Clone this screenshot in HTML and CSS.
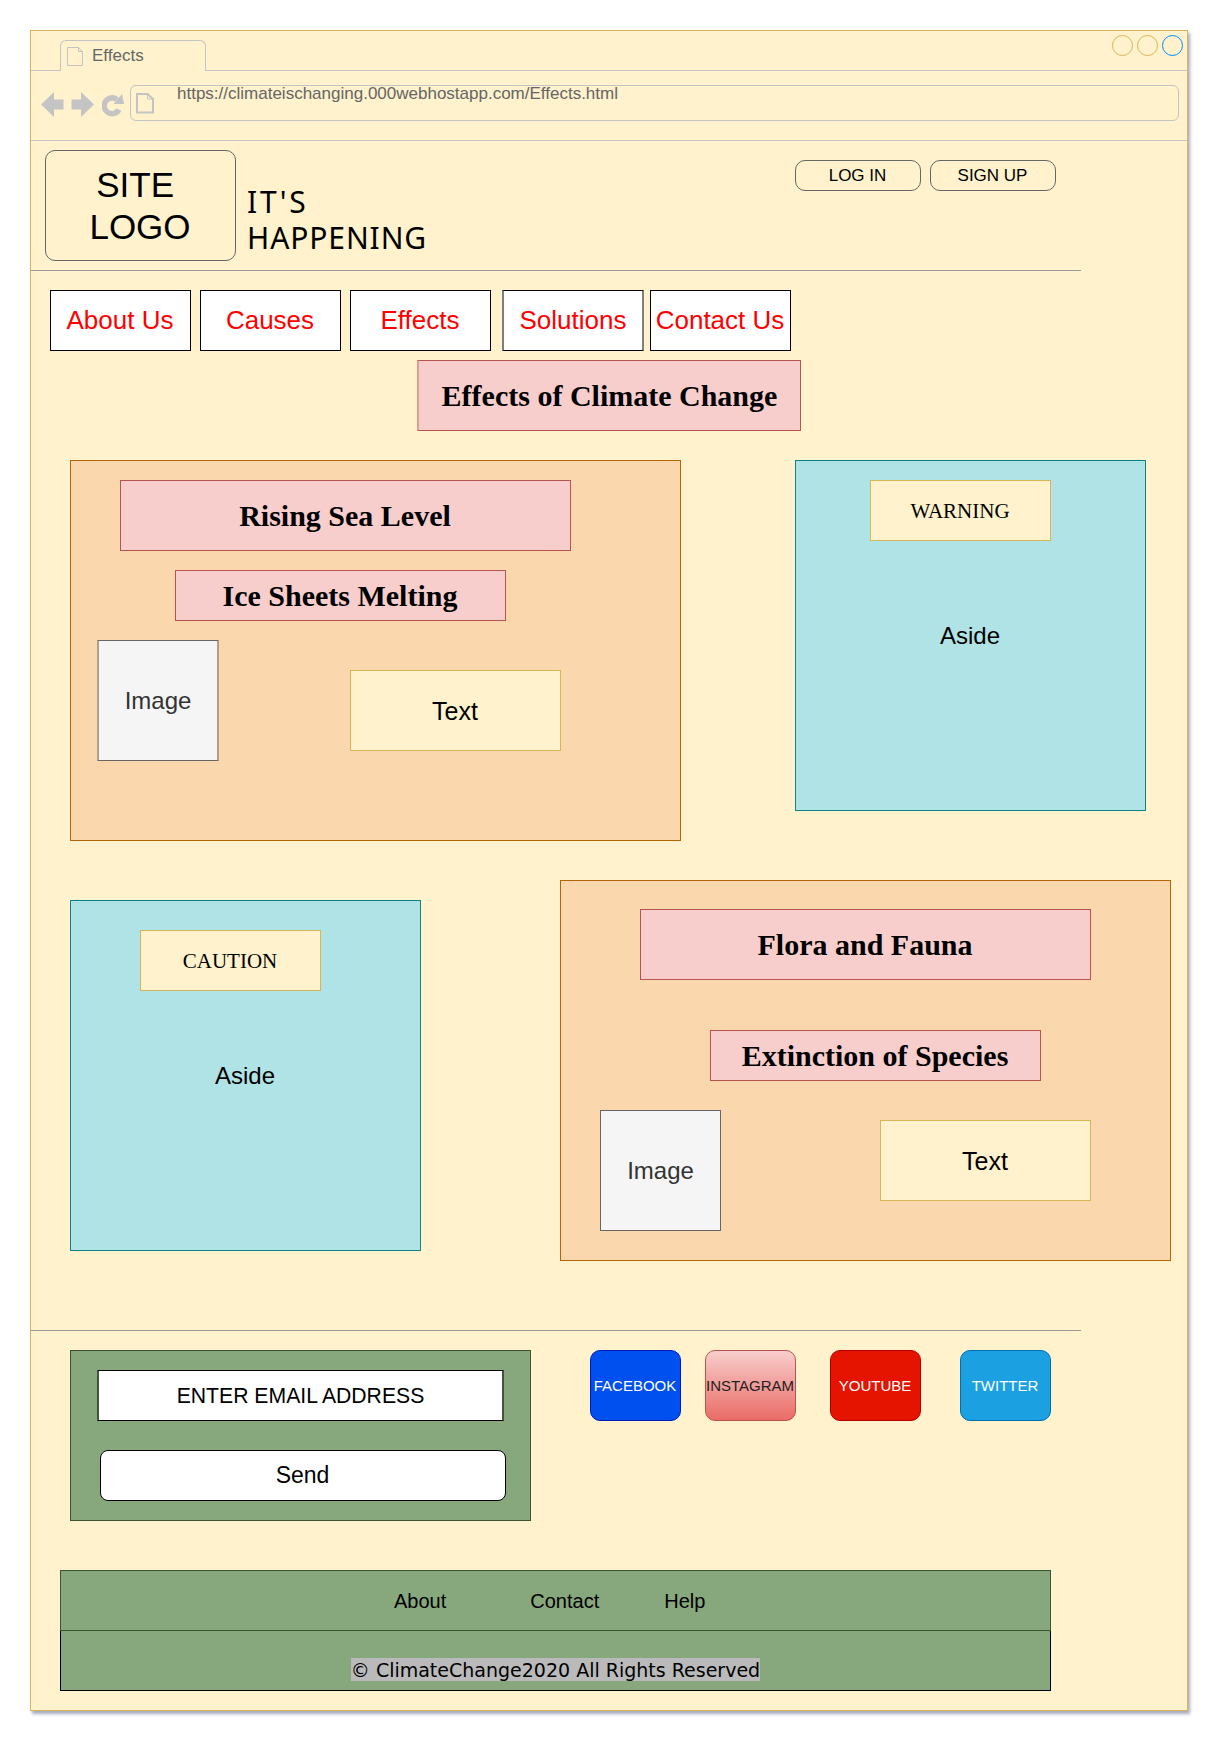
FILE: index.html
```html
<!DOCTYPE html>
<html lang="en">
<head>
<meta charset="utf-8">
<title>Effects</title>
<link rel="stylesheet" href="styles.css">
</head>
<body>
<div class="window">
  <div class="tabstrip">
    <div class="tab">
      <svg class="tab-icon" width="17" height="20" viewBox="0 0 17 20" fill="none" stroke="#c4c4c4"><path d="M.5 .5H11.5L15.5 4.5V18.5H.5ZM11.5 .5V4.5H15.5"/></svg>
      <span>Effects</span>
    </div>
    <div class="controls"><i class="dot"></i><i class="dot"></i><i class="dot dot-blue"></i></div>
  </div>
  <div class="toolbar">
    <svg class="tool" width="23" height="26" viewBox="0 0 23 26" fill="#c4c4c4"><path d="M0 12.500L13 0V7.500H22.500V17.500H13V25Z"/></svg>
    <svg class="tool tool-forward" width="23" height="26" viewBox="0 0 23 26" fill="#c4c4c4"><path d="M23 12.500L10 0V7.500H.5V17.500H10V25Z"/></svg>
    <svg class="tool tool-reload" width="23" height="26" viewBox="0 0 23 26"><path d="M15 7.600A7.900 7.900 0 1 0 17 17.600" fill="none" stroke="#c4c4c4" stroke-width="5.500"/><path d="M20 2L22 12H11.500Z" fill="#c4c4c4"/></svg>
    <div class="url-bar">
      <svg class="url-icon" width="18" height="21" viewBox="0 0 18 21" fill="none" stroke="#c4c4c4"><path stroke-width="2" d="M1 1H11.500L17 6V19.500H1Z"/><path d="M11.500 1V6H17"/></svg>
      <span class="url">https://climateischanging.000webhostapp.com/Effects.html</span>
    </div>
  </div>

  <header class="header">
    <div class="logo">SITE&nbsp;<br>LOGO</div>
    <div class="tagline"><span class="tagline-lead">IT'S</span><br>HAPPENING</div>
    <div class="account"><a class="pill">LOG IN</a><a class="pill">SIGN UP</a></div>
  </header>

  <nav class="nav">
    <a class="nav-item">About Us</a>
    <a class="nav-item">Causes</a>
    <a class="nav-item">Effects</a>
    <a class="nav-item nav-solutions">Solutions</a>
    <a class="nav-item nav-contact">Contact Us</a>
  </nav>

  <h1 class="heading page-title">Effects of Climate Change</h1>

  <div class="row">
    <section class="panel">
      <h2 class="heading panel-title">Rising Sea Level</h2>
      <h3 class="heading sub-ice">Ice Sheets Melting</h3>
      <div class="media media-ice">
        <div class="image image-soft">Image</div>
        <div class="note text-ice">Text</div>
      </div>
    </section>
    <aside class="aside aside-warning">
      <div class="note alert">WARNING</div>
      <p class="aside-label">Aside</p>
    </aside>
  </div>

  <div class="row row-second">
    <aside class="aside aside-caution">
      <div class="note alert">CAUTION</div>
      <p class="aside-label">Aside</p>
    </aside>
    <section class="panel panel-flora">
      <h2 class="heading panel-title">Flora and Fauna</h2>
      <h3 class="heading sub-species">Extinction of Species</h3>
      <div class="media media-species">
        <div class="image">Image</div>
        <div class="note text-species">Text</div>
      </div>
    </section>
  </div>

  <div class="rule"></div>

  <div class="row row-connect">
    <div class="signup">
      <div class="email">ENTER EMAIL ADDRESS</div>
      <div class="send">Send</div>
    </div>
    <a class="social facebook">FACEBOOK</a>
    <a class="social instagram">INSTAGRAM</a>
    <a class="social youtube">YOUTUBE</a>
    <a class="social twitter">TWITTER</a>
  </div>

  <footer class="footer">
    <div class="links"><a>About</a><a class="link-contact">Contact</a><a class="link-help">Help</a></div>
    <div class="legal"><span class="copyright">© ClimateChange2020 All Rights Reserved</span></div>
  </footer>
</div>
</body>
</html>
```
FILE: styles.css
```css
* { box-sizing: border-box; }

body {
  margin: 0;
  padding: 30px;
  background: #fff;
  color: #000;
  font-family: "Liberation Sans", Arial, sans-serif;
}

h1, h2, h3, p { margin: 0; }

.window {
  width: 1158px;
  height: 1681px;
  background: #fff2cc;
  border: 1px solid #d6b656;
  box-shadow: 2px 3px 3px rgba(61, 69, 116, .45);
}

/* browser chrome */
.tabstrip {
  display: flex;
  align-items: flex-start;
  height: 40px;
  box-shadow: inset 0 -1px #c4c4c4;
}
.tab {
  display: flex;
  align-items: flex-start;
  width: 146px;
  height: 31px;
  margin: 9px 0 0 29px;
  padding-left: 6px;
  background: #fff2cc;
  border: 1px solid #c4c4c4;
  border-bottom: 0;
  border-radius: 6px 6px 0 0;
  color: #666;
  font-size: 17px;
  line-height: 20px;
}
.tab span { margin: 5px 0 0 8px; }
.tab-icon { margin-top: 6px; }
.controls { display: flex; gap: 4px; margin: 4px 4px 0 auto; }
.dot { width: 21px; height: 21px; border: 1px solid #d6b656; border-radius: 50%; }
.dot-blue { border-color: #008cff; }

.toolbar {
  display: flex;
  align-items: flex-start;
  height: 70px;
  padding-left: 10px;
  border-bottom: 1px solid #c4c4c4;
}
.tool { margin-top: 21px; }
.tool-forward { margin-left: 7px; }
.tool-reload { margin-left: 8px; }
.url-bar {
  display: flex;
  align-items: flex-start;
  width: 1049px;
  height: 36px;
  margin: 14px 0 0 5px;
  padding-left: 5px;
  border: 1px solid #c4c4c4;
  border-radius: 6px;
}
.url-icon { margin-top: 7px; }
.url { margin: -2px 0 0 23px; color: #666; font-size: 17px; line-height: 20px; }

/* site header */
.header {
  display: flex;
  align-items: flex-start;
  width: 1050px;
  height: 130px;
  border-bottom: 1px solid #999;
}
.logo {
  width: 191px;
  height: 111px;
  margin: 9px 0 0 14px;
  padding: 13px 1px 0 0;
  border: 1px solid #666;
  border-radius: 10px;
  font-size: 35px;
  line-height: 42px;
  text-align: center;
}
.tagline {
  margin: 43px 0 0 11px;
  font-family: "Noto Sans", sans-serif;
  font-size: 30px;
  line-height: 36px;
  letter-spacing: .9px;
}
.tagline-lead { letter-spacing: 2.900px; }
.account { display: flex; gap: 9px; margin: 19px 25px 0 auto; }
.pill {
  width: 126px;
  height: 31px;
  padding-right: 1px;
  border: 1px solid #666;
  border-radius: 10px;
  font-size: 17px;
  line-height: 29px;
  text-align: center;
}

.nav { display: flex; margin: 19px 0 0 19px; }
.nav-item {
  width: 141px;
  height: 61px;
  margin-right: 9px;
  padding-right: 1px;
  background: #fff;
  border: 1px solid #000;
  color: #f00;
  font-size: 26px;
  line-height: 59px;
  text-align: center;
}
.nav-solutions { width: 142px; margin: 0 6px 0 2px; padding: 0; border-width: 1px 2px; border-left-color: #7f7f7f; border-right-color: #7f7f7f; }
.nav-contact { margin-right: 0; white-space: nowrap; }

.heading {
  display: flex;
  align-items: center;
  justify-content: center;
  background: #f8cecc;
  border: 1px solid #b85450;
  font: bold 30px "Liberation Serif", "Times New Roman", serif;
}
.page-title {
  width: 384px;
  height: 71px;
  margin: 9px 0 0 386px;
  border-left: 2px solid #dba08f;
}

/* content */
.row { display: flex; align-items: flex-start; margin: 29px 0 0 39px; }
.row-second { margin-top: 39px; }
.panel {
  width: 611px;
  height: 381px;
  padding: 19px 0 0 49px;
  background: #fad7ac;
  border: 1px solid #b46504;
}
.panel-flora { margin-left: 139px; padding: 28px 0 0 79px; }
.panel-title { width: 451px; height: 71px; padding-right: 1px; }
.sub-ice { width: 331px; height: 51px; margin: 19px 0 0 55px; padding-right: 1px; }
.sub-species { width: 331px; height: 51px; margin: 50px 0 0 70px; padding-right: 1px; }
.media { display: flex; align-items: flex-start; }
.media-ice { margin: 19px 0 0 -23px; }
.media-species { margin: 29px 0 0 -40px; }
.image {
  width: 121px;
  height: 121px;
  background: #f5f5f5;
  border: 1px solid #666;
  color: #333;
  font-size: 24px;
  line-height: 119px;
  text-align: center;
}
.image-soft { width: 122px; border-width: 1px 2px; border-left-color: #afa08c; border-right-color: #afa08c; }
.note {
  display: flex;
  align-items: center;
  justify-content: center;
  background: #fff2cc;
  border: 1px solid #d6b656;
}
.text-ice, .text-species { width: 211px; height: 81px; padding: 2px 1px 0 0; font-size: 25px; }
.text-ice { margin: 30px 0 0 131px; }
.text-species { margin: 10px 0 0 159px; }

.aside {
  width: 351px;
  height: 351px;
  background: #b0e3e6;
  border: 1px solid #0e8088;
  font-size: 24px;
}
.aside-warning { margin-left: 114px; padding-top: 19px; }
.aside-caution { margin-top: 20px; padding-top: 29px; }
.alert {
  width: 181px;
  height: 61px;
  padding: 1px 1px 0 0;
  font: 21px "Liberation Serif", "Times New Roman", serif;
}
.aside-warning .alert { margin-left: 74px; }
.aside-caution .alert { margin-left: 69px; }
.aside-label { padding-right: 1px; line-height: 28px; text-align: center; }
.aside-warning .aside-label { margin-top: 81px; }
.aside-caution .aside-label { margin-top: 71px; }

/* newsletter and social links */
.rule { width: 1050px; height: 1px; margin-top: 69px; background: #999; }
.row-connect { margin-top: 19px; }
.signup {
  width: 461px;
  height: 171px;
  padding: 19px 0 0 26px;
  background: #87a77d;
  border: 1px solid #3a5431;
}
.email, .send {
  height: 51px;
  background: #fff;
  border: 1px solid #000;
  line-height: 49px;
  text-align: center;
}
.email { width: 407px; border-width: 1px 2px; border-left-color: #43533e; border-right-color: #43533e; font-size: 21.200px; }
.send { width: 406px; margin: 29px 0 0 3px; padding-right: 1px; border-radius: 8px; font-size: 23px; }
.social {
  width: 91px;
  height: 71px;
  padding-right: 1px;
  border: 1px solid;
  border-radius: 10px;
  color: #fff;
  font-size: 15px;
  line-height: 69px;
  text-align: center;
}
.facebook { margin-left: 59px; background: #0050ef; border-color: #001dbc; }
.instagram { margin-left: 24px; background: linear-gradient(#f8cecc, #ea6b66); border-color: #b85450; color: #222; }
.youtube { margin-left: 34px; background: #e51400; border-color: #b20000; }
.twitter { margin-left: 39px; background: #1ba1e2; border-color: #006eaf; }

.footer { width: 991px; margin: 49px 0 0 29px; background: #87a77d; }
.links {
  display: flex;
  height: 61px;
  padding-left: 333px;
  border: 1px solid #3a5431;
  font-size: 20px;
  line-height: 61px;
}
.link-contact { margin-left: 84px; }
.link-help { margin-left: 65px; }
.legal {
  display: flex;
  justify-content: center;
  height: 60px;
  padding-top: 27px;
  border: 1px solid #000;
  border-top: 0;
}
.copyright {
  height: 23px;
  background: #bababa;
  font: 19px/25px "DejaVu Sans", Verdana, sans-serif;
  white-space: nowrap;
}
```
